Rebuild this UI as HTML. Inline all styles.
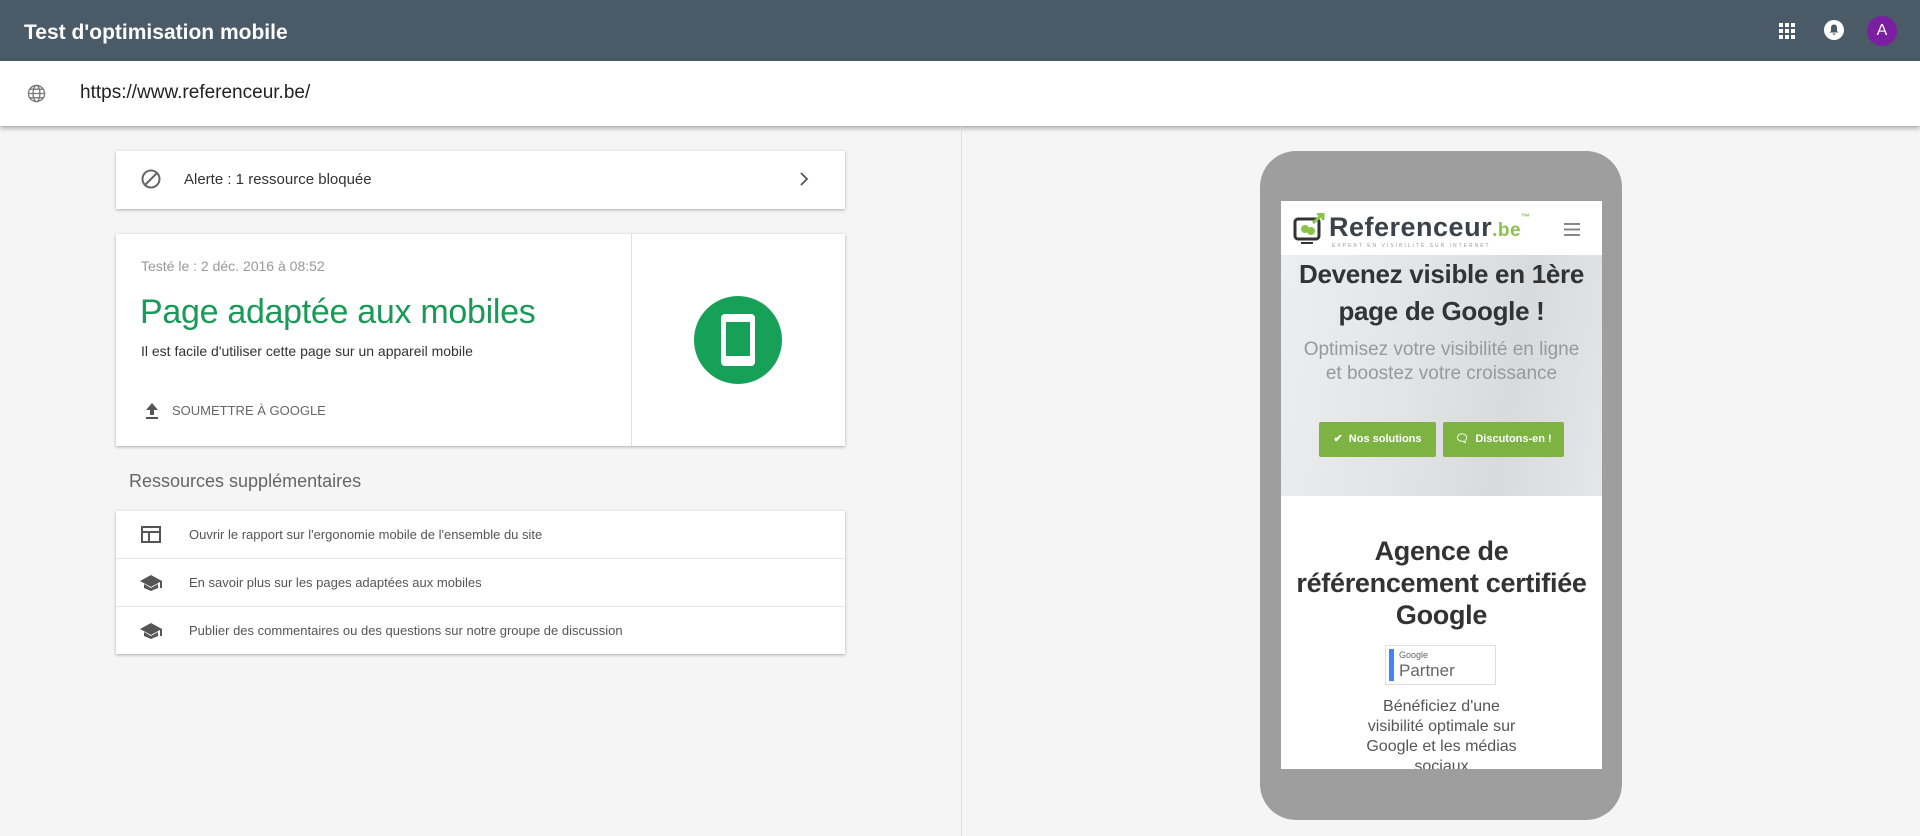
<!DOCTYPE html>
<html><head><meta charset="utf-8"><style>
*{box-sizing:border-box;margin:0;padding:0}
body{width:1920px;height:836px;background:#f5f5f5;font-family:"Liberation Sans",sans-serif;position:relative;overflow:hidden}
.hdr{position:absolute;left:0;top:0;width:1920px;height:61px;background:#4a5a66}
.hdr h1{position:absolute;left:24px;top:21px;color:#fff;font-size:21px;font-weight:bold}
.url{position:absolute;left:0;top:61px;width:1920px;height:65px;background:#fff;box-shadow:0 2px 5px rgba(0,0,0,.35)}
.url span{position:absolute;left:80px;top:21px;font-size:19px;color:#222}
.card{position:absolute;left:116px;width:729px;background:#fff;box-shadow:0 1px 3px rgba(0,0,0,.3)}
.vdiv{position:absolute;left:961px;top:126px;width:1px;height:710px;background:#ddd}
.phone{position:absolute;left:1260px;top:151px;width:362px;height:669px;background:#9e9e9e;border-radius:36px}
.screen{position:absolute;left:1281px;top:201px;width:321px;height:568px;background:#fff;overflow:hidden}
.hero{position:absolute;left:0;top:54px;width:321px;height:241px;background:linear-gradient(100deg,#eceef0,#e2e4e6 40%,#d9dadc 70%,#e4e6e8)}
.c{text-align:center;position:absolute;left:0;width:321px}
.btn{position:absolute;top:167px;height:35px;background:#7cb342;color:#fff;font-size:11px;font-weight:bold;line-height:35px;text-align:center;border-radius:2px}
.row{height:48px;border-bottom:1px solid #e6e6e6;position:relative;font-size:13px;color:#555}
.row span{position:absolute;left:73px;top:16px}
</style></head><body>
<div class="hdr"><h1>Test d'optimisation mobile</h1>
<svg style="position:absolute;left:1778px;top:22px" width="18" height="18" viewBox="0 0 18 18" fill="#fff"><rect x="1" y="1" width="4" height="4"/><rect x="7" y="1" width="4" height="4"/><rect x="13" y="1" width="4" height="4"/><rect x="1" y="7" width="4" height="4"/><rect x="7" y="7" width="4" height="4"/><rect x="13" y="7" width="4" height="4"/><rect x="1" y="13" width="4" height="4"/><rect x="7" y="13" width="4" height="4"/><rect x="13" y="13" width="4" height="4"/></svg>
<svg style="position:absolute;left:1824px;top:20px" width="20" height="20" viewBox="0 0 20 20"><circle cx="10" cy="10" r="10" fill="#fff"/><path d="M10 4.5c-2 0-3 1.5-3 3.5v3l-1.3 1.5h8.6L13 11V8c0-2-1-3.5-3-3.5zM8.7 13.5a1.3 1.3 0 0 0 2.6 0z" fill="#4a5a66"/></svg>
<div style="position:absolute;left:1867px;top:16px;width:30px;height:30px;border-radius:50%;background:#7b1fa2;color:#fff;font-size:16px;text-align:center;line-height:30px">A</div>
</div>
<div class="url">
<svg style="position:absolute;left:27px;top:23px" width="19" height="19" viewBox="0 0 20 20" fill="none" stroke="#777" stroke-width="1.4"><circle cx="10" cy="10" r="8.5"/><ellipse cx="10" cy="10" rx="3.6" ry="8.5"/><path d="M1.5 10h17M3 5.5h14M3 14.5h14"/></svg>
<span>https://www.referenceur.be/</span></div>

<div class="card" style="top:151px;height:58px">
<svg style="position:absolute;left:24px;top:17px" width="22" height="22" viewBox="0 0 22 22" fill="none" stroke="#666" stroke-width="2"><circle cx="11" cy="11" r="8.5"/><path d="M5 17L17 5"/></svg>
<span style="position:absolute;left:68px;top:20px;font-size:15px;color:#333">Alerte : 1 ressource bloquée</span>
<svg style="position:absolute;left:682px;top:21px" width="12" height="14" viewBox="0 0 12 14" fill="none" stroke="#555" stroke-width="1.8"><path d="M3 1l6 6-6 6"/></svg>
</div>

<div class="card" style="top:234px;height:212px">
<div style="position:absolute;left:515px;top:0;width:1px;height:212px;background:#e0e0e0"></div>
<div style="position:absolute;left:25px;top:24px;font-size:14px;color:#999">Testé le : 2 déc. 2016 à 08:52</div>
<div style="position:absolute;left:24px;top:59px;font-size:34px;color:#1a9a57;letter-spacing:-0.3px">Page adaptée aux mobiles</div>
<div style="position:absolute;left:25px;top:109px;font-size:14px;color:#333">Il est facile d'utiliser cette page sur un appareil mobile</div>
<svg style="position:absolute;left:28px;top:168px" width="16" height="18" viewBox="0 0 16 18" fill="#555"><path d="M8 1L2 8h4v5h4V8h4z"/><rect x="2" y="15" width="12" height="2"/></svg>
<div style="position:absolute;left:56px;top:169px;font-size:13px;color:#666">SOUMETTRE À GOOGLE</div>
<div style="position:absolute;left:578px;top:62px;width:88px;height:88px;border-radius:50%;background:#16a058"></div>
<div style="position:absolute;left:605px;top:80px;width:34px;height:52px;border-radius:4px;background:#fff"></div>
<div style="position:absolute;left:610px;top:88px;width:24px;height:34px;background:#16a058"></div>
</div>

<div style="position:absolute;left:129px;top:471px;font-size:18px;color:#666">Ressources supplémentaires</div>
<div class="card" style="top:511px;height:143px">
<div class="row"><svg style="position:absolute;left:25px;top:15px" width="20" height="17" viewBox="0 0 20 17" fill="none" stroke="#555" stroke-width="2"><rect x="1" y="1" width="18" height="15"/><path d="M1 6h18M8 6v10"/></svg><span>Ouvrir le rapport sur l'ergonomie mobile de l'ensemble du site</span></div>
<div class="row"><svg style="position:absolute;left:24px;top:15px" width="22" height="18" viewBox="0 0 22 18" fill="#555"><path d="M11 1L0 7l11 6 9-5v6h2V7z"/><path d="M4 10v4l7 3 7-3v-4l-7 4z"/></svg><span>En savoir plus sur les pages adaptées aux mobiles</span></div>
<div class="row" style="border:0"><svg style="position:absolute;left:24px;top:15px" width="22" height="18" viewBox="0 0 22 18" fill="#555"><path d="M11 1L0 7l11 6 9-5v6h2V7z"/><path d="M4 10v4l7 3 7-3v-4l-7 4z"/></svg><span>Publier des commentaires ou des questions sur notre groupe de discussion</span></div>
</div>

<div class="vdiv"></div>
<div class="phone"></div>
<div class="screen">
<svg style="position:absolute;left:12px;top:12px" width="32" height="34" viewBox="0 0 32 34"><rect x="2" y="6" width="24" height="20" rx="3" fill="none" stroke="#333" stroke-width="3"/><circle cx="12" cy="16" r="4" fill="#8bc34a"/><circle cx="18" cy="18" r="4" fill="#8bc34a"/><path d="M20 10L30 1M24 1h6v6" stroke="#8bc34a" stroke-width="3" fill="none"/><rect x="8" y="29" width="12" height="2" fill="#333"/></svg>
<div style="position:absolute;left:48px;top:11px;font-size:27px;color:#3b4249;font-weight:bold;letter-spacing:0.5px">Referenceur<span style="color:#8bc34a;font-size:19px">.be</span><span style="color:#8bc34a;font-size:9px;vertical-align:top">™</span></div>
<div style="position:absolute;left:51px;top:42px;font-size:5px;color:#999;letter-spacing:2px">EXPERT EN VISIBILITÉ SUR INTERNET</div>
<svg style="position:absolute;left:283px;top:22px" width="16" height="13" viewBox="0 0 16 13" fill="#888"><rect y="0" width="16" height="2"/><rect y="5.5" width="16" height="2"/><rect y="11" width="16" height="2"/></svg>
<div class="hero">
<div class="c" style="top:1px;font-size:26px;font-weight:bold;color:#333;line-height:37px;letter-spacing:-0.3px">Devenez visible en 1ère<br>page de Google !</div>
<div class="c" style="top:83px;font-size:19px;color:#999;line-height:24px">Optimisez votre visibilité en ligne<br>et boostez votre croissance</div>
<div class="btn" style="left:38px;width:117px">✔&nbsp; Nos solutions</div>
<div class="btn" style="left:162px;width:121px">🗨&nbsp; Discutons-en !</div>
</div>
<div class="c" style="top:334px;font-size:27px;font-weight:bold;color:#333;line-height:32px;letter-spacing:-0.3px">Agence de<br>référencement certifiée<br>Google</div>
<div style="position:absolute;left:104px;top:444px;width:111px;height:40px;border:1px solid #ddd;background:#fff"><div style="position:absolute;left:3px;top:3px;width:5px;height:32px;background:#4285f4"></div><div style="position:absolute;left:13px;top:4px;font-size:9px;color:#666">Google</div><div style="position:absolute;left:13px;top:15px;font-size:17px;color:#666">Partner</div></div>
<div class="c" style="top:496px;font-size:16px;color:#555;line-height:20px">Bénéficiez d'une<br>visibilité optimale sur<br>Google et les médias<br>sociaux</div>
</div>
</body></html>
